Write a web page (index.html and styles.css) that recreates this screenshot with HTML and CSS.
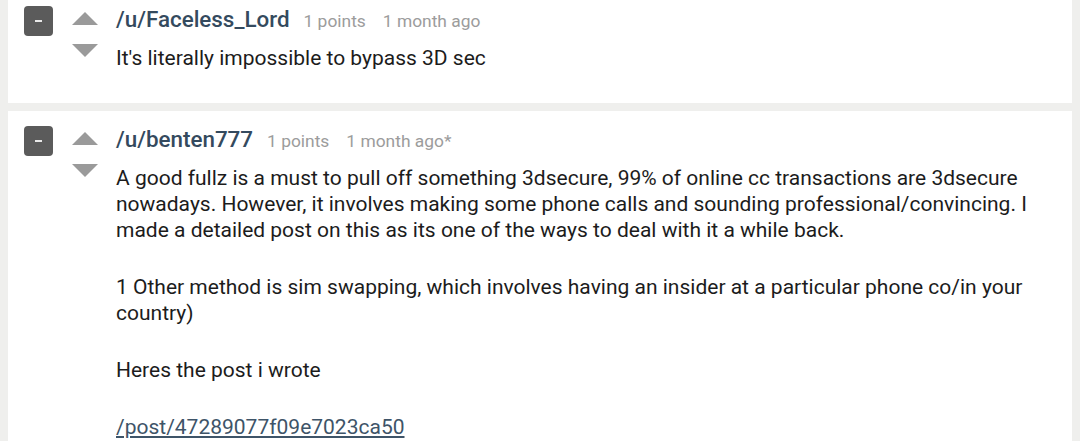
FILE: index.html
```html
<!DOCTYPE html>
<html>
<head>
<meta charset="utf-8">
<link rel="stylesheet" href="styles.css">
</head>
<body>
<div class="thread">
  <div class="card first">
    <div class="comment">
      <div class="collapse"><span class="dash"></span></div>
      <div class="votes">
        <svg class="arrow" width="26" height="13" viewBox="0 0 26 13"><polygon points="13,0 26,13 0,13"/></svg>
        <svg class="arrow down" width="26" height="13" viewBox="0 0 26 13"><polygon points="0,0 26,0 13,13"/></svg>
      </div>
      <div class="content">
        <div class="meta"><a class="user">/u/Faceless_Lord</a><span class="info">1 points</span><span class="info">1 month ago</span></div>
        <div class="body"><p>It's literally impossible to bypass 3D sec</p></div>
      </div>
    </div>
  </div>
  <div class="card">
    <div class="comment">
      <div class="collapse"><span class="dash"></span></div>
      <div class="votes">
        <svg class="arrow" width="26" height="13" viewBox="0 0 26 13"><polygon points="13,0 26,13 0,13"/></svg>
        <svg class="arrow down" width="26" height="13" viewBox="0 0 26 13"><polygon points="0,0 26,0 13,13"/></svg>
      </div>
      <div class="content">
        <div class="meta"><a class="user">/u/benten777</a><span class="info">1 points</span><span class="info">1 month ago*</span></div>
        <div class="body">
          <p>A good fullz is a must to pull off something 3dsecure, 99% of online cc transactions are 3dsecure nowadays. However, it involves making some phone calls and sounding professional/convincing. I made a detailed post on this as its one of the ways to deal with it a while back.</p>
          <p>1 Other method is sim swapping, which involves having an insider at a particular phone co/in your country)</p>
          <p>Heres the post i wrote</p>
          <p><a class="link">/post/47289077f09e7023ca50</a></p>
        </div>
      </div>
    </div>
  </div>
</div>
</body>
</html>
```
FILE: styles.css
```css
html, body {
  margin: 0;
  padding: 0;
  background: #efefed;
  height: 100%;
  overflow: hidden;
}
body {
  font-family: Roboto, "Liberation Sans", sans-serif;
  color: #1c1c1c;
}
.thread {
  display: flex;
  flex-direction: column;
  gap: 8px;
  padding: 0 8px;
  margin-top: -9px;
}
.card {
  background: #fff;
  padding: 15px 16px 32px 16px;
}
.comment {
  display: flex;
  align-items: flex-start;
}
.collapse {
  width: 29px;
  height: 30px;
  background: #5b5b5b;
  border-radius: 4px;
  display: flex;
  align-items: center;
  justify-content: center;
  flex: none;
}
.dash {
  width: 7px;
  height: 2px;
  background: #e8e8e8;
}
.votes {
  display: flex;
  flex-direction: column;
  gap: 19px;
  margin-left: 19px;
  padding-top: 6px;
  flex: none;
}
.arrow {
  display: block;
  fill: #9a9a9a;
}
.content {
  margin-left: 18px;
  flex: 1;
  padding-right: 6px;
}
.meta {
  display: flex;
  align-items: baseline;
  height: 26px;
  line-height: 26px;
}
.user {
  font-size: 22.4px;
  font-weight: 500;
  color: #344a5e;
  margin-right: 14px;
}
.info {
  font-size: 17.4px;
  color: #9c9c9c;
  margin-right: 17px;
}
.body {
  margin-top: 13px;
  font-size: 21px;
  line-height: 26px;
}
.body p {
  margin: 0 0 31px 0;
}
.body p:last-child {
  margin-bottom: 0;
}
.link {
  color: #3e5468;
  text-decoration: underline;
}
```
